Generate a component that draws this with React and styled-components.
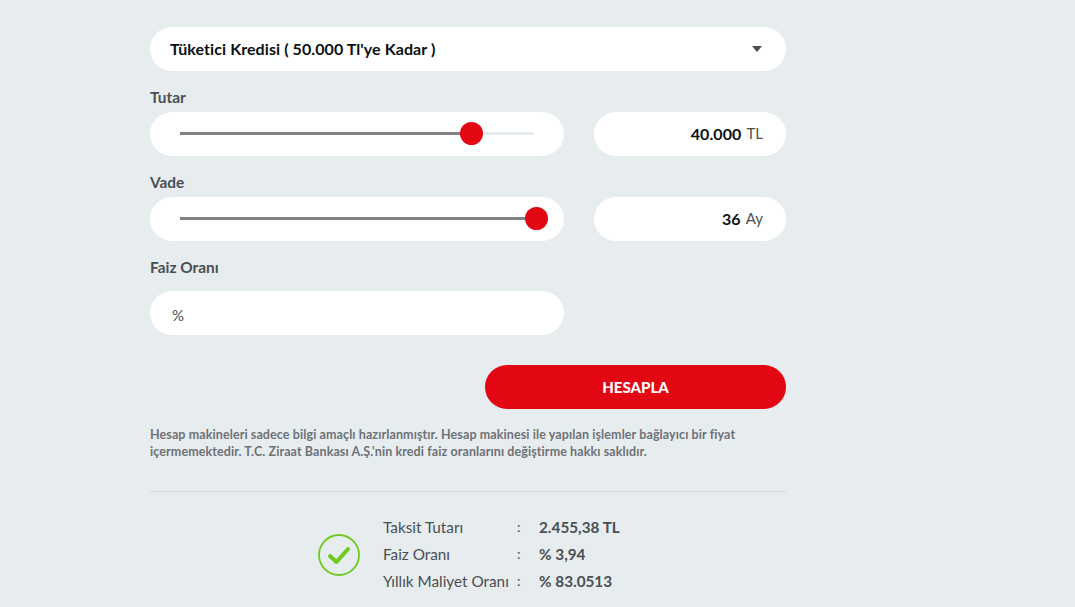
import React from "react";
import styled, { createGlobalStyle } from "styled-components";

const GlobalStyle = createGlobalStyle`
  html, body {
    margin: 0;
    padding: 0;
    height: 100%;
    overflow: hidden;
    background: #e7ecee;
    font-family: Lato, "Liberation Sans", sans-serif;
    color: #4a4f54;
  }
`;

const Page = styled.div`
  width: 636px;
  margin-left: 150px;
  padding-top: 27px;
`;

const Pill = styled.div`
  display: flex;
  align-items: center;
  height: 44px;
  background: #fff;
  border-radius: 22px;
  box-sizing: border-box;
`;

const Select = styled(Pill)`
  justify-content: space-between;
  padding: 0 24px 2px 20px;
  font-size: 16px;
  font-weight: 700;
  letter-spacing: 0.08px;
  color: #0b0f14;
`;

const Caret = styled.span`
  width: 0;
  height: 0;
  margin-top: 2px;
  border-left: 5.5px solid transparent;
  border-right: 5.5px solid transparent;
  border-top: 6px solid #4a4f54;
`;

const Label = styled.div`
  font-size: 15.4px;
  font-weight: 700;
  line-height: 18px;
  color: #4a4f54;
  margin-top: ${(p) => p.$top}px;
  margin-bottom: ${(p) => p.$bottom}px;
`;

const Row = styled.div`
  display: flex;
  gap: 30px;
`;

const SliderBox = styled(Pill)`
  width: 414px;
  padding: 0 30px;
`;

const Track = styled.div`
  position: relative;
  flex: 1;
  height: 3px;
  margin-top: -2px;
  background: #e7ecee;
`;

const Fill = styled.div`
  height: 100%;
  background: #808285;
`;

const Thumb = styled.span`
  position: absolute;
  top: -10px;
  width: 23px;
  height: 23px;
  margin-left: -11.5px;
  border-radius: 50%;
  background: #e30613;
`;

const Amount = styled(Pill)`
  width: 192px;
  justify-content: flex-end;
  padding: 0 23px 2px 0;
  font-size: 15px;
  color: #4a4f54;
`;

const Strong = styled.strong`
  font-size: 16px;
  font-weight: 700;
  letter-spacing: 0.1px;
  color: #0b0f14;
  margin-right: 5px;
`;

const Percent = styled(Pill)`
  width: 414px;
  padding: 4px 0 0 22px;
  font-size: 15px;
  color: #4a4f54;
`;

const Actions = styled.div`
  display: flex;
  justify-content: flex-end;
  margin-top: 30px;
`;

const Button = styled.button`
  width: 301px;
  height: 44px;
  border: 0;
  border-radius: 22px;
  background: #e30613;
  color: #fff;
  font-family: inherit;
  font-size: 15px;
  font-weight: 900;
`;

const Note = styled.p`
  margin: 17px 0 0;
  font-size: 12.5px;
  font-weight: 700;
  letter-spacing: 0.1px;
  line-height: 17px;
  color: #6d7278;
  white-space: nowrap;
`;

const Divider = styled.hr`
  margin: 31px 0 0;
  border: 0;
  border-top: 1px solid #d3d7d9;
`;

const Result = styled.div`
  display: flex;
  align-items: center;
  margin: 21px 0 0 168px;
`;

const Check = styled.svg`
  width: 42px;
  height: 42px;
  margin-right: 23px;
  margin-top: 2px;
`;

const Table = styled.div`
  display: grid;
  grid-template-columns: 134px 22px auto;
  grid-auto-rows: 27px;
  align-items: center;
  font-size: 15.3px;
`;

const Name = styled.span`
  color: #4a4f54;
  white-space: nowrap;
`;

const Colon = styled.span`
  font-size: 14px;
`;

const Value = styled.span`
  font-weight: 700;
`;

const rows = [
  ["Taksit Tutarı", "2.455,38 TL"],
  ["Faiz Oranı", "% 3,94"],
  ["Yıllık Maliyet Oranı", "% 83.0513"],
];

const RangeField = ({ percent }) => (
  <SliderBox>
    <Track>
      <Fill style={{ width: `${Math.min(percent, 100)}%` }} />
      <Thumb style={{ left: `${percent}%` }} />
    </Track>
  </SliderBox>
);

export default function App() {
  return (
    <>
      <GlobalStyle />
      <Page>
        <Select>
          Tüketici Kredisi ( 50.000 Tl'ye Kadar )
          <Caret />
        </Select>

        <Label $top={17} $bottom={6}>Tutar</Label>
        <Row>
          <RangeField percent={82.3} />
          <Amount>
            <Strong>40.000</Strong> TL
          </Amount>
        </Row>

        <Label $top={17} $bottom={6}>Vade</Label>
        <Row>
          <RangeField percent={100.7} />
          <Amount>
            <Strong>36</Strong> Ay
          </Amount>
        </Row>

        <Label $top={17} $bottom={15}>Faiz Oranı</Label>
        <Percent>%</Percent>

        <Actions>
          <Button>HESAPLA</Button>
        </Actions>

        <Note>
          Hesap makineleri sadece bilgi amaçlı hazırlanmıştır. Hesap makinesi ile yapılan işlemler bağlayıcı bir fiyat
          <br />
          içermemektedir. T.C. Ziraat Bankası A.Ş.'nin kredi faiz oranlarını değiştirme hakkı saklıdır.
        </Note>

        <Divider />

        <Result>
          <Check viewBox="0 0 42 42" fill="none">
            <circle cx="21" cy="21" r="20" stroke="#6fc91e" strokeWidth="1.8" />
            <path d="M12 22l6.5 6L30 15" stroke="#6fc91e" strokeWidth="4" strokeLinecap="round" strokeLinejoin="round" />
          </Check>
          <Table>
            {rows.map(([name, value]) => (
              <React.Fragment key={name}>
                <Name>{name}</Name>
                <Colon>:</Colon>
                <Value>{value}</Value>
              </React.Fragment>
            ))}
          </Table>
        </Result>
      </Page>
    </>
  );
}
